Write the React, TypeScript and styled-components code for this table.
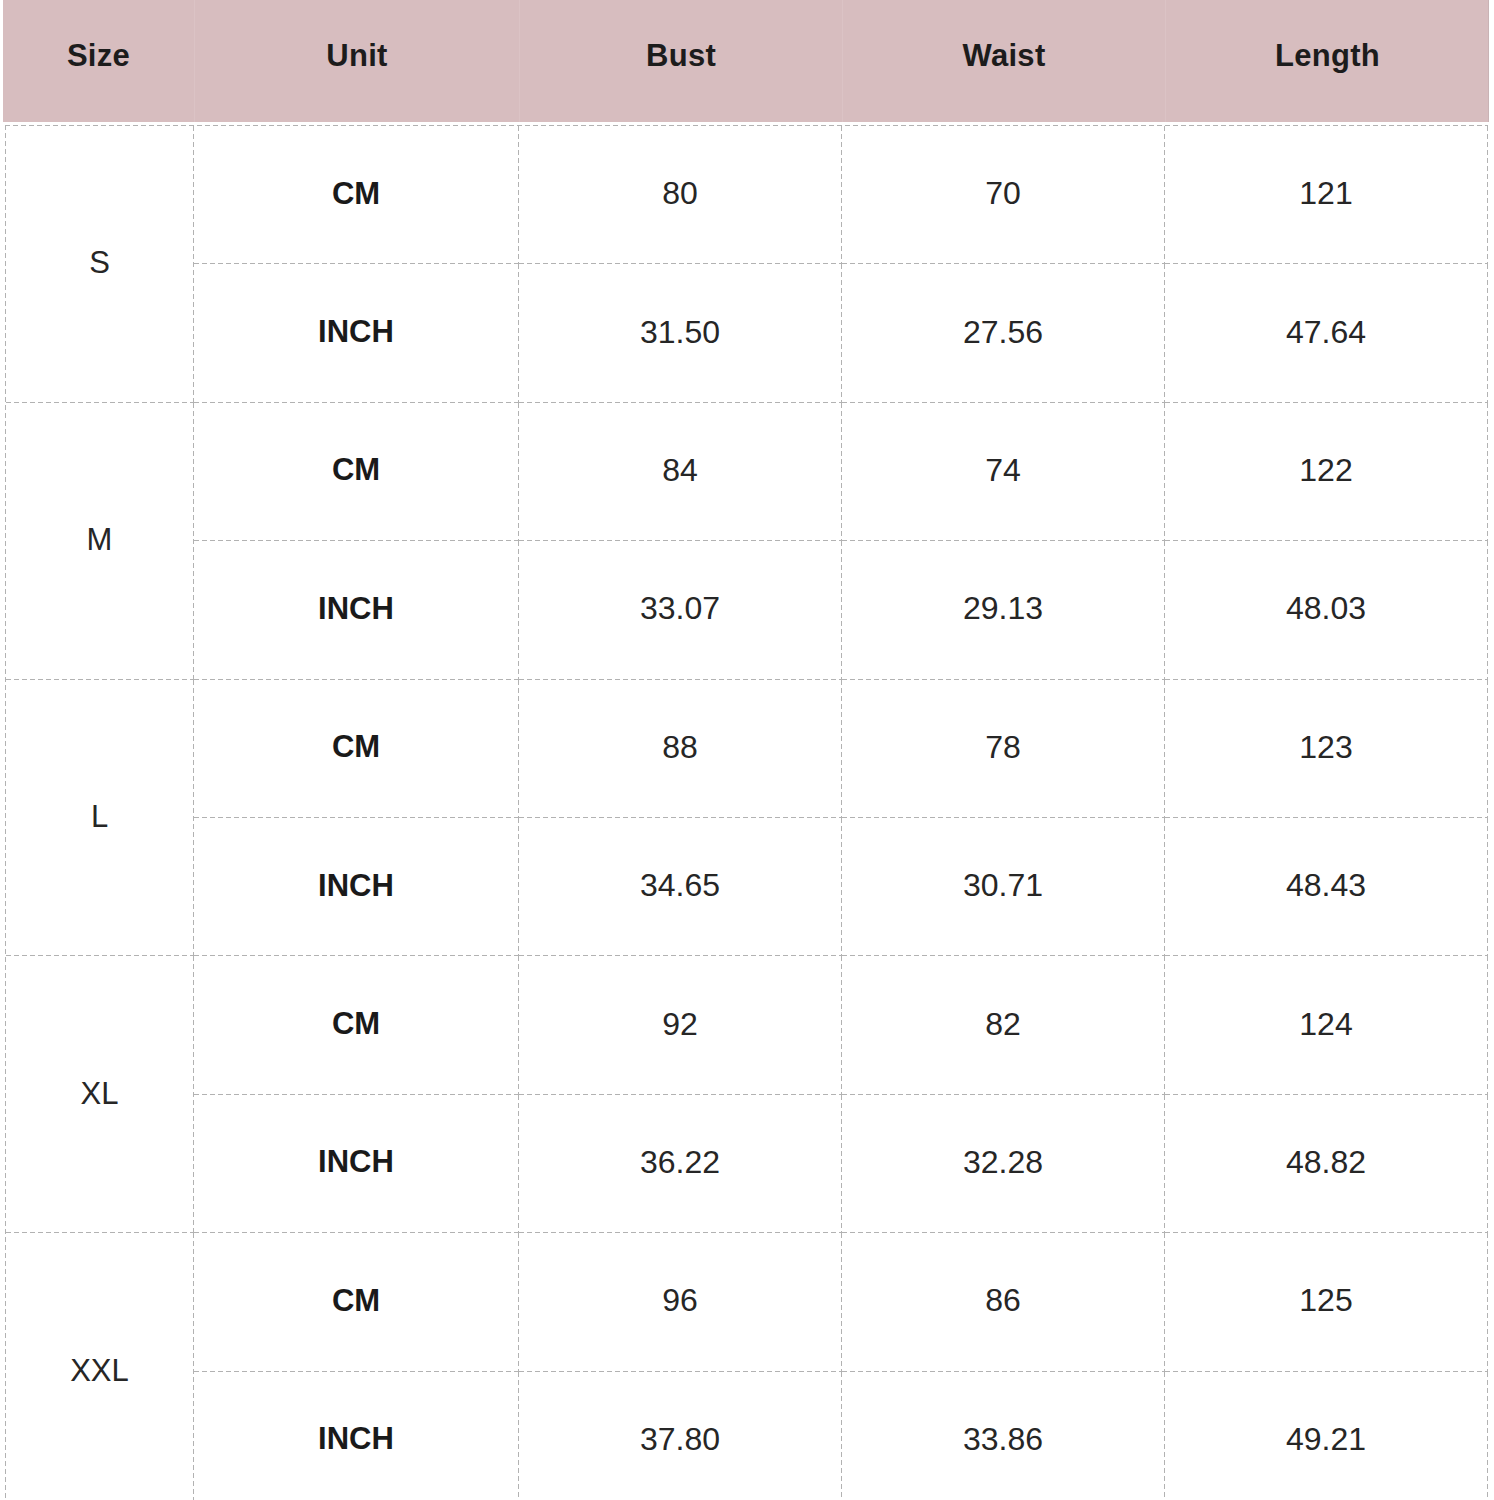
import React from "react";
import styled, { createGlobalStyle } from "styled-components";

const GlobalStyle = createGlobalStyle`
  html, body {
    margin: 0;
    padding: 0;
    background: #ffffff;
  }
  body {
    font-family: "Liberation Sans", Arial, sans-serif;
    color: #222222;
  }
`;

const DASH = "#b2b2b2";
const hDash = `repeating-linear-gradient(to right, ${DASH} 0 5px, transparent 5px 8px)`;
const vDash = `repeating-linear-gradient(to bottom, ${DASH} 0 5px, transparent 5px 8px)`;

const Page = styled.div`
  padding: 0 5px 0 3px;
  width: 1494px;
  box-sizing: border-box;
`;

const Header = styled.div`
  display: grid;
  grid-template-columns: 192px 325px 323px 323px 323px;
  height: 122px;
  width: 1486px;
  background: #d7bdbf;
  border-right: 1px solid #c9b3b5;
  box-sizing: border-box;
`;

const HeadCell = styled.div<{ $last?: boolean }>`
  display: flex;
  align-items: center;
  justify-content: center;
  font-weight: 700;
  font-size: 31px;
  letter-spacing: 0.3px;
  color: #1c1c1c;
  padding-bottom: 10px;
  box-sizing: border-box;
  border-right: ${(p) => (p.$last ? "none" : "1px solid #dbc3c5")};
`;

const Body = styled.div`
  display: grid;
  grid-template-columns: 188px 325px 323px 323px 323px;
  grid-auto-rows: 138.4px;
  margin-top: 3px;
  margin-left: 2px;
  padding: 1px 0 0 1px;
  width: 1483px;
  box-sizing: border-box;
  background-image: ${hDash}, ${vDash};
  background-size: 100% 1px, 1px 100%;
  background-position: left top, left top;
  background-repeat: no-repeat;
`;

const Cell = styled.div<{ $bold?: boolean; $span?: boolean }>`
  display: flex;
  align-items: center;
  justify-content: center;
  box-sizing: border-box;
  padding: 0 1px 3px 0;
  background-image: ${hDash}, ${vDash};
  background-size: 100% 1px, 1px 100%;
  background-position: left bottom, right top;
  background-repeat: no-repeat;
  font-size: ${(p) => (p.$bold ? "31px" : "32px")};
  font-weight: ${(p) => (p.$bold ? 700 : 400)};
  color: ${(p) => (p.$bold ? "#1a1a1a" : "#262626")};
  grid-row: ${(p) => (p.$span ? "span 2" : "auto")};
`;

const SizeCell = styled(Cell)`
  font-size: 31px;
  padding-bottom: 2px;
`;

type Group = {
  size: string;
  cm: string[];
  inch: string[];
};

const data: Group[] = [
  { size: "S", cm: ["80", "70", "121"], inch: ["31.50", "27.56", "47.64"] },
  { size: "M", cm: ["84", "74", "122"], inch: ["33.07", "29.13", "48.03"] },
  { size: "L", cm: ["88", "78", "123"], inch: ["34.65", "30.71", "48.43"] },
  { size: "XL", cm: ["92", "82", "124"], inch: ["36.22", "32.28", "48.82"] },
  { size: "XXL", cm: ["96", "86", "125"], inch: ["37.80", "33.86", "49.21"] },
];

const headers = ["Size", "Unit", "Bust", "Waist", "Length"];

export default function App() {
  return (
    <Page>
      <GlobalStyle />
      <Header>
        {headers.map((h, i) => (
          <HeadCell key={h} $last={i === headers.length - 1}>
            {h}
          </HeadCell>
        ))}
      </Header>
      <Body>
        {data.map((g) => (
          <React.Fragment key={g.size}>
            <SizeCell $span>{g.size}</SizeCell>
            <Cell $bold>CM</Cell>
            {g.cm.map((v, i) => (
              <Cell key={"c" + i}>{v}</Cell>
            ))}
            <Cell $bold>INCH</Cell>
            {g.inch.map((v, i) => (
              <Cell key={"i" + i}>{v}</Cell>
            ))}
          </React.Fragment>
        ))}
      </Body>
    </Page>
  );
}
